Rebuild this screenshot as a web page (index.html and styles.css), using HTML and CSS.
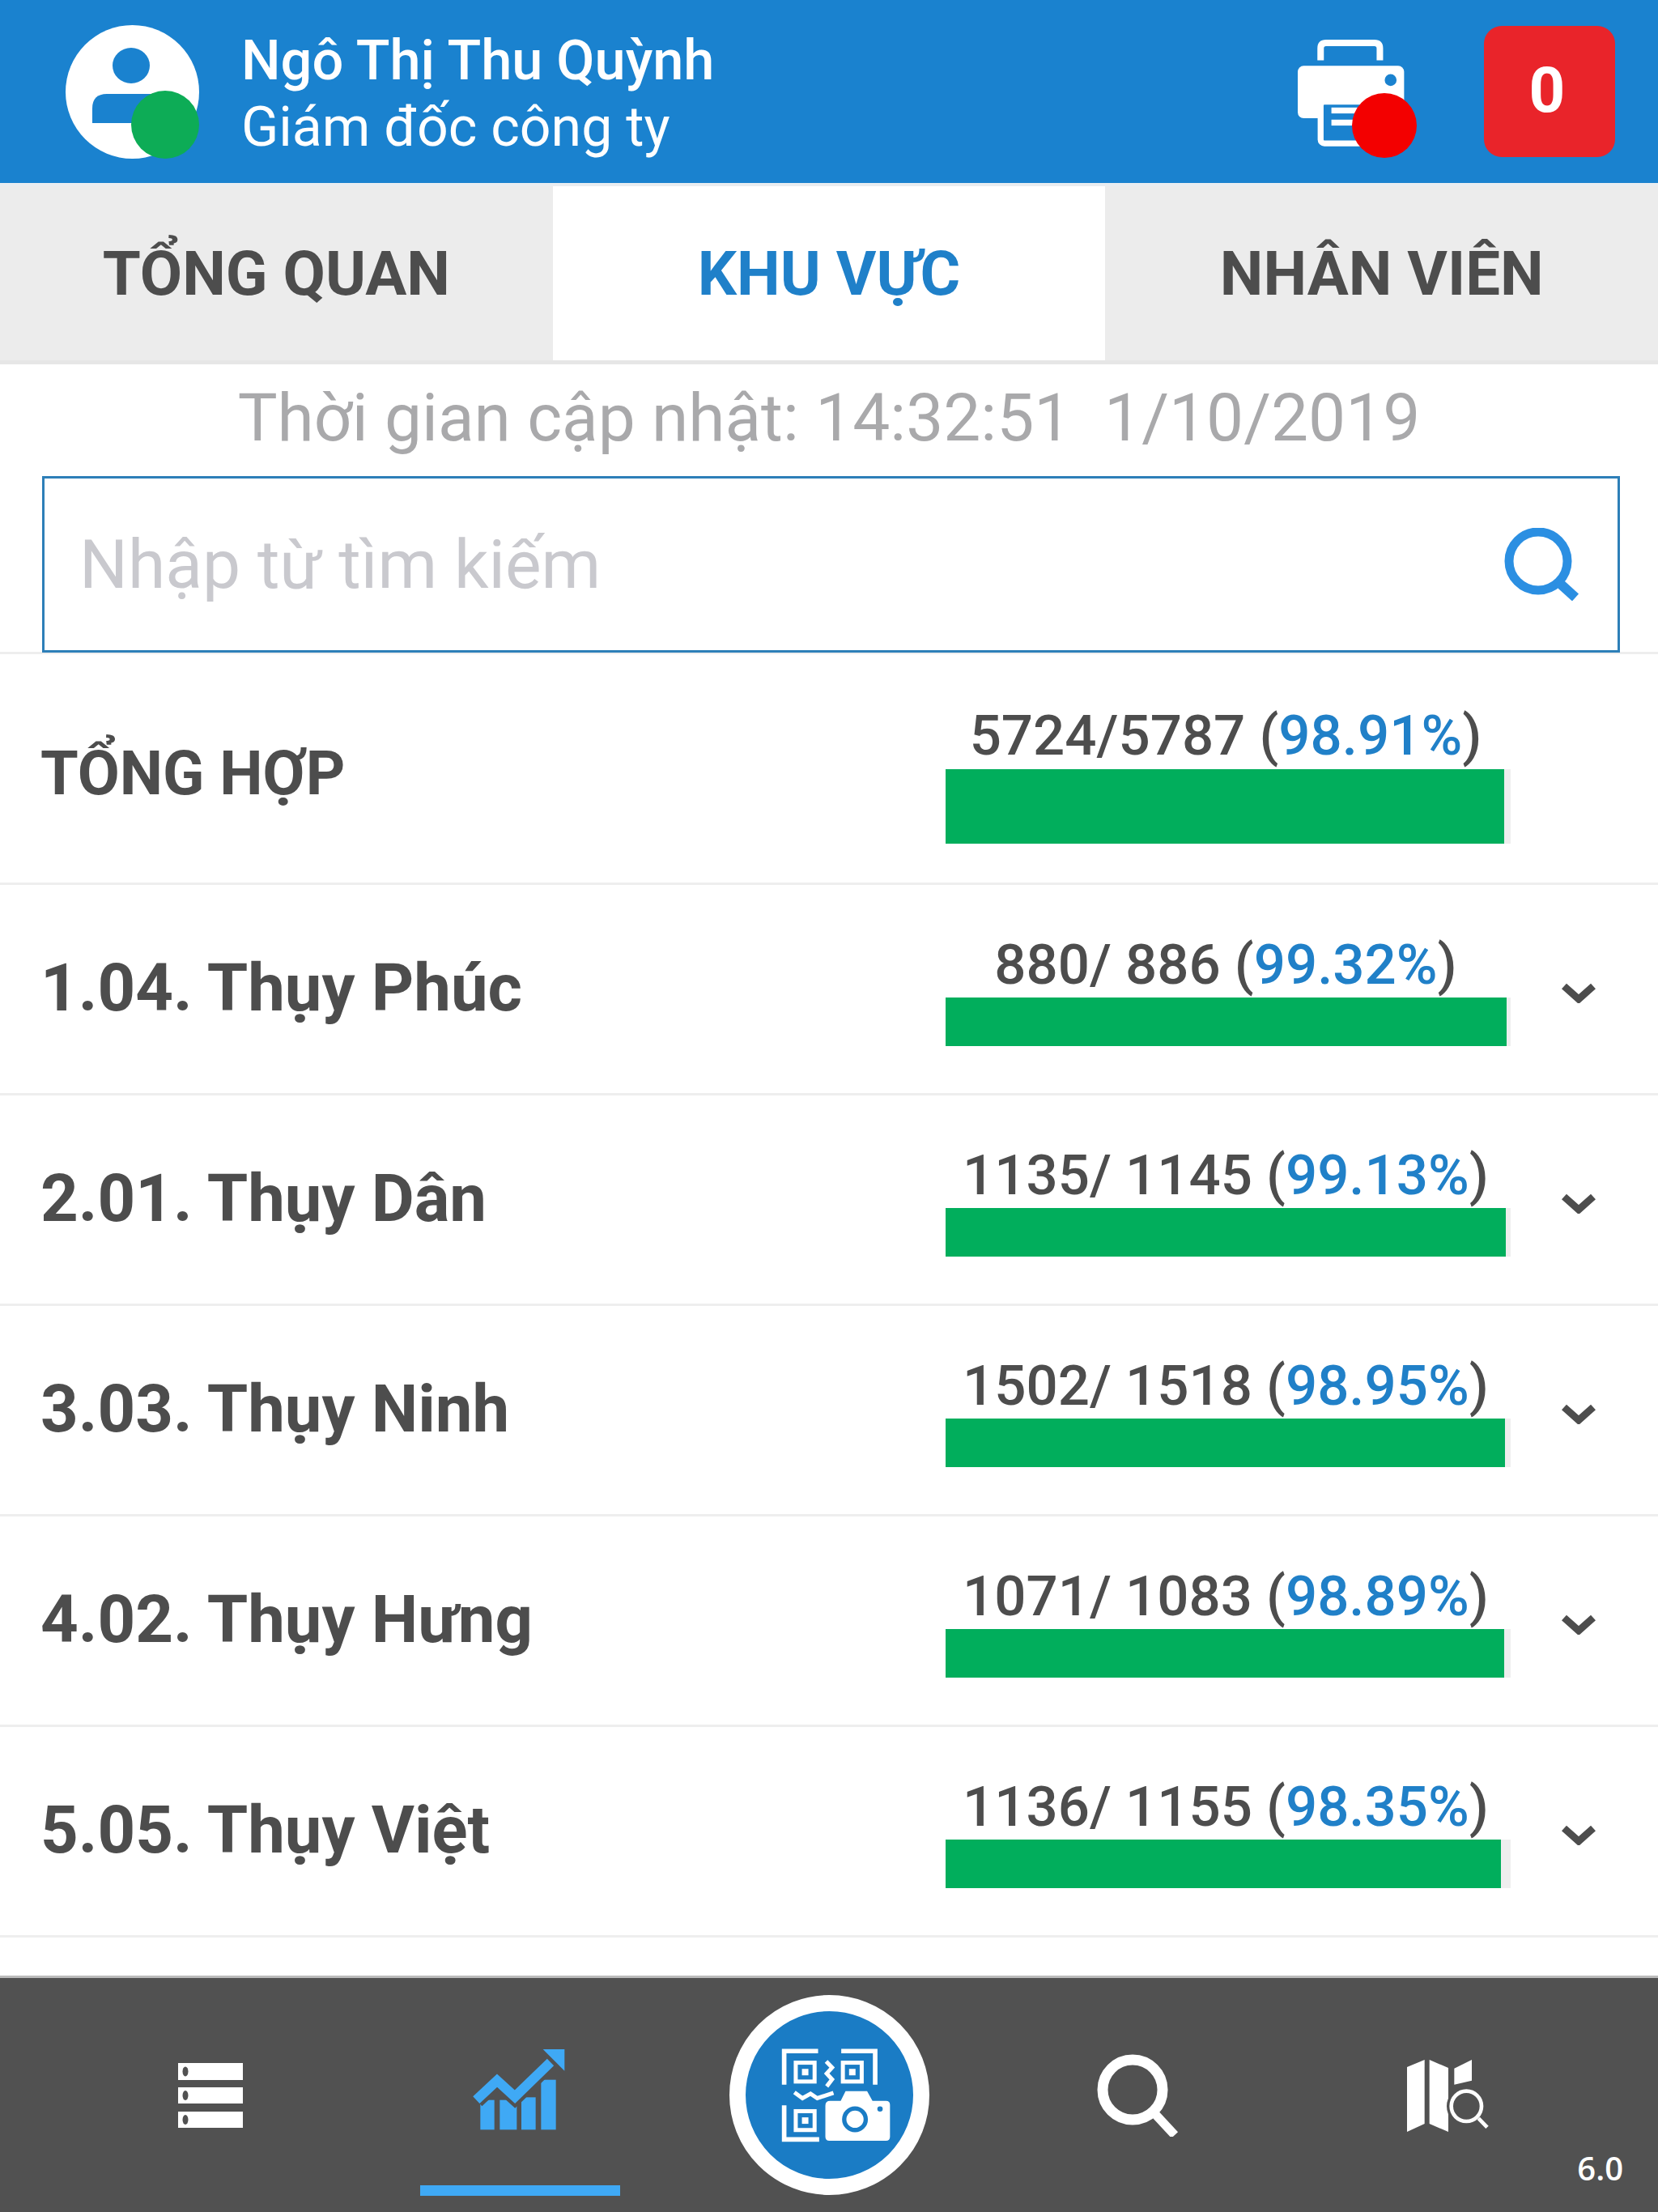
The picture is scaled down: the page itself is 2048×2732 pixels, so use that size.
FILE: index.html
```html
<!DOCTYPE html>
<html lang="vi">

<head>
    <meta charset="UTF-8">
    <meta name="viewport" content="width=device-width, initial-scale=1.0">
    <title>Khu vực</title>
    <link rel="stylesheet" href="styles.css">
</head>

<body>
    <header class="top">
        <div class="avatar">
            <svg viewBox="0 0 165 165" width="165" height="165">
                <circle cx="82.5" cy="82.5" r="82.5" fill="#fff" />
                <ellipse cx="81" cy="50" rx="23" ry="22" fill="#1a82cf" />
                <path d="M33 121V103Q33 85 51 85H111Q129 85 129 103V121Z" fill="#1a82cf" />
            </svg>
            <span class="online"></span>
        </div>
        <div class="who">
            <div class="who-name">Ngô Thị Thu Quỳnh</div>
            <div class="who-role">Giám đốc công ty</div>
        </div>
        <div class="printer">
            <svg viewBox="70 85 445 445" width="148" height="148">
                <path d="M155 165V120Q155 100 175 100H355Q375 100 375 120V165" fill="none" stroke="#fff" stroke-width="24" />
                <rect x="70" y="185" width="395" height="195" rx="22" fill="#fff" />
                <circle cx="415" cy="238" r="22" fill="#1a82cf" />
                <rect x="155" y="318" width="270" height="155" rx="14" fill="#1a82cf" stroke="#fff" stroke-width="22" />
                <rect x="195" y="340" width="100" height="22" fill="#fff" />
                <rect x="195" y="385" width="100" height="22" fill="#fff" />
            </svg>
            <span class="printer-dot"></span>
        </div>
        <div class="count">0</div>
    </header>

    <nav class="tabs">
        <a href="#" class="tab">TỔNG QUAN</a>
        <a href="#" class="tab active">KHU VỰC</a>
        <a href="#" class="tab">NHÂN VIÊN</a>
    </nav>

    <p class="updated">Thời gian cập nhật: 14:32:51&nbsp; 1/10/2019</p>

    <div class="search-wrap">
        <div class="search">
            <span class="search-hint">Nhập từ tìm kiếm</span>
            <svg viewBox="0 0 93 90" width="93" height="90">
                <circle cx="42" cy="41" r="36" fill="none" stroke="#2b8fe2" stroke-width="11" />
                <path d="M66 66L88 86" stroke="#2b8fe2" stroke-width="12" />
            </svg>
        </div>
    </div>

    <ul class="list">
        <li class="row total">
            <div class="label">TỔNG HỢP</div>
            <div class="stat">
                <div class="stat-text">5724/5787 (<b>98.91%</b>)</div>
                <div class="track"><div class="fill" style="width: 98.91%"></div></div>
            </div>
            <div class="more"></div>
        </li>
        <li class="row">
            <div class="label">1.04. Thụy Phúc</div>
            <div class="stat">
                <div class="stat-text">880/ 886 (<b>99.32%</b>)</div>
                <div class="track"><div class="fill" style="width: 99.32%"></div></div>
            </div>
            <div class="more"><svg viewBox="0 0 44 26" width="44" height="26"><path d="M4 5L22 21L40 5" /></svg></div>
        </li>
        <li class="row">
            <div class="label">2.01. Thụy Dân</div>
            <div class="stat">
                <div class="stat-text">1135/ 1145 (<b>99.13%</b>)</div>
                <div class="track"><div class="fill" style="width: 99.13%"></div></div>
            </div>
            <div class="more"><svg viewBox="0 0 44 26" width="44" height="26"><path d="M4 5L22 21L40 5" /></svg></div>
        </li>
        <li class="row">
            <div class="label">3.03. Thụy Ninh</div>
            <div class="stat">
                <div class="stat-text">1502/ 1518 (<b>98.95%</b>)</div>
                <div class="track"><div class="fill" style="width: 98.95%"></div></div>
            </div>
            <div class="more"><svg viewBox="0 0 44 26" width="44" height="26"><path d="M4 5L22 21L40 5" /></svg></div>
        </li>
        <li class="row">
            <div class="label">4.02. Thụy Hưng</div>
            <div class="stat">
                <div class="stat-text">1071/ 1083 (<b>98.89%</b>)</div>
                <div class="track"><div class="fill" style="width: 98.89%"></div></div>
            </div>
            <div class="more"><svg viewBox="0 0 44 26" width="44" height="26"><path d="M4 5L22 21L40 5" /></svg></div>
        </li>
        <li class="row">
            <div class="label">5.05. Thụy Việt</div>
            <div class="stat">
                <div class="stat-text">1136/ 1155 (<b>98.35%</b>)</div>
                <div class="track"><div class="fill" style="width: 98.35%"></div></div>
            </div>
            <div class="more"><svg viewBox="0 0 44 26" width="44" height="26"><path d="M4 5L22 21L40 5" /></svg></div>
        </li>
    </ul>

    <footer class="bottom">
        <a href="#" class="item">
            <svg viewBox="0 0 80 80" width="80" height="80">
                <rect y="0" width="80" height="21" fill="#fff" />
                <rect y="30" width="80" height="20" fill="#fff" />
                <rect y="60" width="80" height="20" fill="#fff" />
                <ellipse cx="9" cy="10.5" rx="3.5" ry="6" fill="#515151" />
                <ellipse cx="9" cy="40" rx="3.5" ry="6" fill="#515151" />
                <ellipse cx="9" cy="70" rx="3.5" ry="6" fill="#515151" />
            </svg>
        </a>
        <a href="#" class="item active">
            <svg class="chart" viewBox="60 50 360 330" width="120" height="110">
                <rect x="100" y="250" width="52" height="110" fill="#3fa9f5" />
                <rect x="172" y="250" width="63" height="110" fill="#3fa9f5" />
                <rect x="252" y="240" width="53" height="120" fill="#3fa9f5" />
                <rect x="325" y="175" width="55" height="185" fill="#3fa9f5" />
                <path d="M85 250L162 178L228 238L360 110" fill="none" stroke="#515151" stroke-width="62" />
                <path d="M85 250L162 178L228 238L360 110" fill="none" stroke="#3fa9f5" stroke-width="36" />
                <path d="M332 62H412V142Z" fill="#3fa9f5" />
            </svg>
        </a>
        <a href="#" class="item">
            <span class="scan">
                <svg viewBox="200 220 460 380" width="153" height="127">
                    <g fill="none" stroke="#fff" stroke-width="17">
                        <path d="M388 247H262V372" />
                        <path d="M474 247H600V372" />
                        <path d="M262 448V575H392" />
                        <rect x="305" y="290" width="70" height="70" stroke-width="15" />
                        <rect x="480" y="290" width="70" height="70" stroke-width="15" />
                        <rect x="305" y="470" width="70" height="70" stroke-width="15" />
                        <path d="M418 285L440 308L420 330L440 352L420 378" stroke-width="15" />
                        <path d="M300 400L330 422L360 405L385 422L445 402" stroke-width="15" />
                    </g>
                    <g fill="#fff">
                        <rect x="328" y="313" width="24" height="24" />
                        <rect x="503" y="313" width="24" height="24" />
                        <rect x="328" y="493" width="24" height="24" />
                        <path d="M415 450Q415 432 433 432H472L490 396H570L590 432H640Q655 432 655 447V565Q655 580 640 580H430Q415 580 415 565Z" />
                    </g>
                    <circle cx="525" cy="500" r="40" fill="#fff" stroke="#1a7cc5" stroke-width="16" />
                    <circle cx="618" cy="462" r="10" fill="#1a7cc5" />
                </svg>
            </span>
        </a>
        <a href="#" class="item">
            <svg viewBox="0 0 102 102" width="102" height="102">
                <circle cx="44" cy="44" r="37" fill="none" stroke="#fff" stroke-width="13" />
                <path d="M70 72L96 100" stroke="#fff" stroke-width="11" />
            </svg>
        </a>
        <a href="#" class="item">
            <svg viewBox="100 50 330 300" width="110" height="100">
                <path d="M115 95L180 68V305L115 335Z" fill="#fff" />
                <path d="M198 68L268 98V335L198 305Z" fill="#fff" />
                <path d="M290 100L355 68V145L290 160Z" fill="#fff" />
                <circle cx="335" cy="240" r="66" fill="#515151" stroke="#515151" stroke-width="14" />
                <circle cx="335" cy="240" r="56" fill="#515151" stroke="#fff" stroke-width="14" />
                <path d="M380 285L412 318" stroke="#fff" stroke-width="14" />
            </svg>
        </a>
        <span class="version">6.0</span>
    </footer>
</body>

</html>
```

FILE: styles.css
```css
* {
    margin: 0;
    padding: 0;
    box-sizing: border-box;
}

ul {
    list-style: none;
}

a {
    text-decoration: none;
}

body {
    font-family: Roboto, "Noto Sans", sans-serif;
    background: #fff;
    color: #4d4d4d;
}

/* top bar */
.top {
    display: flex;
    align-items: center;
    height: 226px;
    padding: 0 53px 0 81px;
    background: #1a82cf;
    color: #fff;
}

.avatar {
    position: relative;
    width: 165px;
    height: 165px;
}

.avatar svg {
    display: block;
}

.online {
    position: absolute;
    right: 0;
    bottom: 0;
    width: 84px;
    height: 84px;
    border-radius: 50%;
    background: #0dac56;
}

.who {
    flex: 1;
    margin-left: 52px;
    padding-top: 6px;
}

.who-name {
    font-size: 68.5px;
    line-height: 82px;
    font-weight: 500;
}

.who-role {
    font-size: 68px;
    line-height: 82px;
}

.printer {
    position: relative;
    width: 148px;
    height: 148px;
    margin-top: 18px;
    margin-right: 82px;
}

.printer svg {
    display: block;
}

.printer-dot {
    position: absolute;
    left: 67px;
    top: 67px;
    width: 80px;
    height: 80px;
    border-radius: 50%;
    background: #f30000;
}

.count {
    width: 162px;
    height: 162px;
    padding-right: 6px;
    border-radius: 22px;
    background: #e9242a;
    font-size: 78px;
    font-weight: 700;
    line-height: 160px;
    text-align: center;
}

/* tabs */
.tabs {
    display: flex;
    height: 224px;
    padding-top: 4px;
    background: #e9edf1;
    border-bottom: 5px solid #e6e6e6;
}

.tab {
    flex: 1;
    display: flex;
    align-items: center;
    justify-content: center;
    background: #ececec;
    color: #4d4d4d;
    font-size: 76px;
    font-weight: 700;
}

.tab.active {
    background: #fff;
    color: #1f80c9;
}

.updated {
    height: 138px;
    line-height: 132px;
    text-align: center;
    font-size: 82px;
    color: #a9a9ab;
}

/* search */
.search-wrap {
    padding: 0 47px 0 52px;
    border-bottom: 3px solid #eee;
}

.search {
    display: flex;
    align-items: center;
    justify-content: space-between;
    height: 218px;
    margin-bottom: -1px;
    padding: 0 47px 0 43px;
    border: 3px solid #2d7fb8;
    background: #fff;
}

.search-hint {
    font-size: 84px;
    color: #c9c9ce;
}

/* list rows */
.row {
    display: flex;
    align-items: center;
    height: 260px;
    padding-left: 50px;
    border-bottom: 3px solid #eee;
}

.row.total {
    height: 285px;
}

.label {
    width: 1118px;
    padding-bottom: 3px;
    font-size: 81.5px;
    font-weight: 700;
    color: #4d4d4d;
}

.total .label {
    padding: 12px 0 0;
    font-size: 75.5px;
}

.stat {
    display: flex;
    flex-direction: column;
    justify-content: flex-end;
    align-self: stretch;
    width: 698px;
    padding-bottom: 58px;
}

.total .stat {
    padding-bottom: 48px;
}

.stat-text {
    padding-right: 6px;
    text-align: center;
    font-size: 69px;
    line-height: 81px;
    font-weight: 500;
}

.total .stat-text {
    line-height: 83px;
}

.stat-text b {
    font-weight: 500;
    color: #2080c8;
}

.track {
    height: 60px;
    background: #eee;
}

.total .track {
    height: 92px;
}

.fill {
    height: 100%;
    background: #01ae5c;
}

.more {
    flex: 1;
    display: flex;
    justify-content: center;
    padding: 8px 14px 0 0;
}

.more svg {
    display: block;
}

.more path {
    fill: none;
    stroke: #4d4d4d;
    stroke-width: 9;
}

/* bottom navigation */
.bottom {
    position: fixed;
    left: 0;
    right: 0;
    bottom: 0;
    display: grid;
    grid-template-columns: repeat(5, 382px);
    height: 292px;
    padding-left: 69px;
    background: #515151;
    border-top: 3px solid #bcbcbc;
}

.item {
    position: relative;
    display: flex;
    align-items: center;
    justify-content: center;
}

.item.active::after {
    content: "";
    position: absolute;
    left: 68px;
    bottom: 20px;
    width: 247px;
    height: 13px;
    background: #3fa9f5;
}

.chart {
    margin: 0 5px 12px 0;
}

.scan {
    display: flex;
    align-items: center;
    justify-content: center;
    width: 247px;
    height: 247px;
    border: 20px solid #fff;
    border-radius: 50%;
    background: #1a7cc5;
}

.version {
    position: absolute;
    right: 43px;
    bottom: 27px;
    font-family: "Open Sans", sans-serif;
    font-size: 40px;
    font-weight: 600;
    color: #fff;
}
```
